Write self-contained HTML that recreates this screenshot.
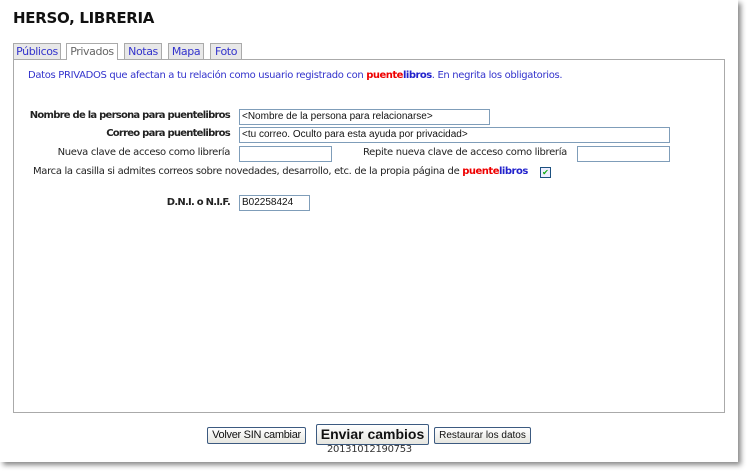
<!DOCTYPE html>
<html><head><meta charset="utf-8"><style>
body{margin:0;width:750px;height:473px;background:#fff;font-family:"DejaVu Sans",Verdana,sans-serif;position:relative;overflow:hidden}
.card{position:absolute;left:0;top:0;width:738px;height:462px;background:#fff;box-shadow:3px 3px 5px #888}
.a{position:absolute;white-space:nowrap}
h1{position:absolute;left:13px;top:9px;margin:0;font-size:15px;font-weight:bold;color:#111;letter-spacing:-0.3px}
.tab{position:absolute;top:43px;height:15px;border:1px solid #aaa;border-bottom:none;background:#e8e8e8;font-size:11px;color:#33c;text-align:center;line-height:15px;letter-spacing:-0.4px}
.tab.on{background:#fff;color:#666;height:16px}
.panel{position:absolute;left:13px;top:59px;width:710px;height:352px;border:1px solid #aaa;background:#fff}
.l{font-size:10px;color:#222;letter-spacing:-0.33px}
.b{font-weight:bold;letter-spacing:-0.75px}
.l b{letter-spacing:-0.5px}
.in{position:absolute;height:14px;border:1px solid #7f9db9;font-family:"Liberation Sans",Arial,sans-serif;font-size:10px;line-height:14px;padding-left:2px;color:#111;background:#fff}
.btn{position:absolute;border:1px solid #3c5a80;border-radius:2px;background:linear-gradient(#fff,#e6e6e0);font-family:"Liberation Sans",Arial,sans-serif;font-size:11px;text-align:center;color:#111}
</style></head><body>
<div class="card"></div>
<h1>HERSO, LIBRERIA</h1>
<div class="panel"></div>
<div class="tab" style="left:13px;width:46px">Públicos</div>
<div class="tab on" style="left:66px;width:50px">Privados</div>
<div class="tab" style="left:124px;width:36px">Notas</div>
<div class="tab" style="left:168px;width:34px">Mapa</div>
<div class="tab" style="left:210px;width:30px">Foto</div>
<div class="a l" style="left:28px;top:70px;color:#33c">Datos PRIVADOS que afectan a tu relación como usuario registrado con <b style="color:#e00">puente</b><b style="color:#22c">libros</b>. En negrita los obligatorios.</div>
<div class="a l b" style="right:520px;top:110px">Nombre de la persona para puentelibros</div>
<div class="in" style="left:239px;top:109px;width:247px">&lt;Nombre de la persona para relacionarse&gt;</div>
<div class="a l b" style="right:520px;top:128px">Correo para puentelibros</div>
<div class="in" style="left:239px;top:127px;width:427px">&lt;tu correo. Oculto para esta ayuda por privacidad&gt;</div>
<div class="a l" style="right:520px;top:147px">Nueva clave de acceso como librería</div>
<div class="in" style="left:239px;top:146px;width:89px"></div>
<div class="a l" style="left:363px;top:147px">Repite nueva clave de acceso como librería</div>
<div class="in" style="left:577px;top:146px;width:89px"></div>
<div class="a l" style="left:33px;top:166px">Marca la casilla si admites correos sobre novedades, desarrollo, etc. de la propia página de <b style="color:#e00">puente</b><b style="color:#22c">libros</b></div>
<div class="a" style="left:540px;top:167px;width:9px;height:9px;border:1px solid #1c5180;background:#eef;font-size:8px;line-height:9px;color:#1a1;text-align:center">✔</div>
<div class="a l b" style="right:520px;top:197px">D.N.I. o N.I.F.</div>
<div class="in" style="left:239px;top:195px;width:67px">B02258424</div>
<div class="btn" style="left:207px;top:427px;width:97px;height:15px;line-height:15px;letter-spacing:-0.3px">Volver SIN cambiar</div>
<div class="btn" style="left:316px;top:424px;width:111px;height:19px;line-height:19px;font-size:14px;font-weight:bold">Enviar cambios</div>
<div class="btn" style="left:434px;top:427px;width:95px;height:15px;line-height:15px;font-size:10px">Restaurar los datos</div>
<div class="a" style="left:327px;top:444px;font-size:10px;color:#333;letter-spacing:-0.3px">20131012190753</div>
</body></html>
